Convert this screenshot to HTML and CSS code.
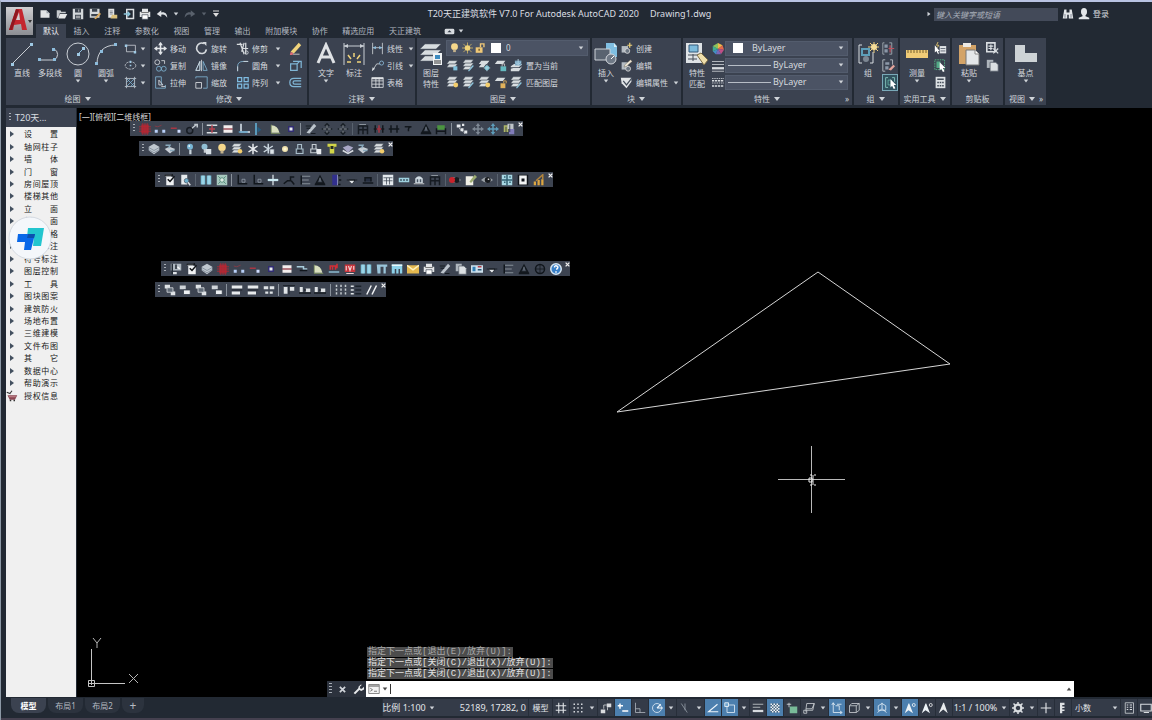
FILE: index.html
```html
<!DOCTYPE html>
<html lang="zh-CN">
<head>
<meta charset="utf-8">
<title>T20天正建筑软件 V7.0</title>
<link rel="stylesheet" href="styles.css">
</head>
<body>
<svg class="defs" aria-hidden="true">
<symbol id="dn" viewBox="0 0 8 8"><path d="M1 2h6L4 6z" fill="currentColor"/></symbol>
<symbol id="app" viewBox="0 0 27 27"><path d="M3 22 10 1h6l5 21h-5l-1-6-7 1-1 5z" fill="#c4262e"/><path d="M10 12l3-8 1 8z" fill="#d3cdd0"/><path d="M10 1 3 22h3l7-20z" fill="#8f1820"/><path d="M22 12h4l-2 3z" fill="#333"/></symbol>
<symbol id="new" viewBox="0 0 16 16"><path d="M2 3h8l4 4v6H2z" fill="#e2e4e6"/><path d="M10 3v4h4" fill="#98a0a8"/></symbol>
<symbol id="open" viewBox="0 0 16 16"><path d="M1 3h5l1 2h6v2H5l-2 6H1z" fill="#c6cacd"/><path d="M5 8h10l-3 6H3z" fill="#e5e7e8"/></symbol>
<symbol id="save" viewBox="0 0 16 16"><path d="M1 1h14v14H1z" fill="#d4d8db"/><path d="M4 1h8v5H4zM4 9h8v6H4z" fill="#3b434e"/><path d="M5 11h6M5 13h6M9 2v3" stroke="#e7e7e7"/></symbol>
<symbol id="saveas" viewBox="0 0 16 16"><path d="M1 1h13v12H1z" fill="#d4d8db"/><path d="M4 1h7v4H4zM3 8h9v3H3z" fill="#3b434e"/><path d="M7 14l7-8 2 2-7 7z" fill="#d9a95f"/></symbol>
<symbol id="webopen" viewBox="0 0 16 16"><path d="M3 1h8v12H3z" fill="#e2e4e6"/><path d="M5 4h4M5 6h4M5 8h4" stroke="#68707a"/><path d="M8 9h7v5H6z" fill="#dcc27c"/></symbol>
<symbol id="websave" viewBox="0 0 16 16"><path d="M5 2h9v12H5z" fill="none" stroke="#dce0e4" stroke-width="2"/><path d="M1 8h8M6 5l3 3-3 3" fill="none" stroke="#8bc5dc" stroke-width="2"/></symbol>
<symbol id="print" viewBox="0 0 16 16"><path d="M4 1h8v4H4zM1 5h14v7H1z" fill="#e3e5e7"/><path d="M4 9h8v6H4z" fill="#fff" stroke="#4a515c"/><path d="M3 6h10" stroke="#555"/></symbol>
<symbol id="undo" viewBox="0 0 16 16"><path d="M7 3 1 8l6 4V9c4-1 6 1 8 4 0-5-3-8-8-7z" fill="#e0e3e6"/></symbol>
<symbol id="redo" viewBox="0 0 16 16"><path d="M9 3l6 5-6 4V9C5 8 3 10 1 13c0-5 3-8 8-7z" fill="#59616c"/></symbol>
<symbol id="custom" viewBox="0 0 8 8"><path d="M1 1h6" stroke="#ddd"/><path d="M1 3h6L4 7z" fill="#ddd"/></symbol>
<symbol id="cam" viewBox="0 0 16 10"><rect x="1" y="1" width="14" height="8" rx="2" fill="#d8dce0"/><path d="M5 6l3-3 3 3z" fill="#333b46"/></symbol>
<symbol id="binoc" viewBox="0 0 16 16"><path d="M3 2h3v4h4V2h3l2 12H9V9H7v5H1z" fill="#e3e6e9"/><path d="M4 8v5M12 8v5" stroke="#697180"/></symbol>
<symbol id="user" viewBox="0 0 16 16"><ellipse cx="8" cy="5" rx="4" ry="5" fill="#e3e6e9"/><path d="M6 8h4v3l5 2v2H1v-2l5-2z" fill="#e3e6e9"/></symbol>
<symbol id="line" viewBox="0 0 24 24"><path d="M2 22 22 2" stroke="#c9ced4"/><path d="M1 21h3v3H1zM20 1h3v3h-3z" fill="#9fc9e4"/></symbol>
<symbol id="pline" viewBox="0 0 24 24"><path d="M2 18h14a6 6 0 0 0 0-11" fill="none" stroke="#c9ced4"/><path d="M0 16h3v3H0zM14 6h3v3h-3zM15 16h3v3h-3z" fill="#8dbcdc"/></symbol>
<symbol id="circle" viewBox="0 0 24 24"><circle cx="12" cy="12" r="11" fill="none" stroke="#c9ced4"/><path d="M12 12l5-5" stroke="#8dbcdc"/><path d="M11 11h3v3h-3zM16 5h3v3h-3z" fill="#9fc9e4"/></symbol>
<symbol id="arc" viewBox="0 0 24 24"><path d="M3 22C3 10 10 3 22 3" fill="none" stroke="#c9ced4"/><path d="M1 20h3v3H1zM6 8h3v3H6zM20 1h3v3h-3z" fill="#8dbcdc"/></symbol>
<symbol id="rect" viewBox="0 0 16 16"><path d="M3 4h11v8H3z" fill="none" stroke="#c9ced4"/><path d="M1 3h3v3H1zM12 11h3v3h-3z" fill="#9fc9e4"/></symbol>
<symbol id="ell" viewBox="0 0 16 16"><ellipse cx="8" cy="8" rx="6.500" ry="4.500" fill="none" stroke="#c9ced4" stroke-dasharray="3 1"/><path d="M7 7h2v2H7zM7 2h2v3H7z" fill="#9fc9e4"/></symbol>
<symbol id="hatch" viewBox="0 0 16 16"><path d="M1 3h14M1 13h14M3 1v14M13 1v14" stroke="#c9ced4"/><path d="M3 8l5-5M3 13 13 3M8 13l5-5M3 3l10 10" stroke="#7fb1d0"/></symbol>
<symbol id="move" viewBox="0 0 16 16"><path d="M8 1v14M1 8h14" stroke="#e2e5e8" stroke-width="2"/><path d="M5 4l3-4 3 4zM5 12l3 4 3-4zM4 5 0 8l4 3zM12 5l4 3-4 3z" fill="#e2e5e8"/></symbol>
<symbol id="rotate" viewBox="0 0 16 16"><path d="M11 2C5-1 0 6 3 11s10 4 11-2" fill="none" stroke="#d5d9dd" stroke-width="2"/><path d="M9 0h5v5z" fill="#d5d9dd"/></symbol>
<symbol id="trim" viewBox="0 0 16 16"><path d="M5 1l5 14M10 1 7 12M1 3h7M8 8h7M12 1v14" stroke="#d9dde0" stroke-width="1.500"/><circle cx="13" cy="13" r="2" fill="none" stroke="#d9dde0"/></symbol>
<symbol id="copy" viewBox="0 0 16 16"><circle cx="4" cy="4" r="3" fill="none" stroke="#d9dde0"/><circle cx="6" cy="12" r="3" fill="none" stroke="#80b6d6"/><circle cx="12" cy="12" r="3" fill="none" stroke="#80b6d6"/><path d="M9 2h4v4" fill="none" stroke="#d9dde0"/></symbol>
<symbol id="mirror" viewBox="0 0 16 16"><path d="M6 3v11H1zM10 3v11h5z" fill="none" stroke="#80b6d6"/><path d="M6 3v11H1zM8 1v14" fill="none" stroke="#d9dde0"/></symbol>
<symbol id="fillet" viewBox="0 0 16 16"><path d="M2 15V9Q2 3 9 3h6" fill="none" stroke="#80b6d6"/><path d="M2 15V9M9 3h6" stroke="#d9dde0"/></symbol>
<symbol id="stretch" viewBox="0 0 16 16"><path d="M2 1h7v10M2 1v14h12v-4" fill="none" stroke="#80b6d6"/><path d="M6 11V5l5 6zM9 13h5" fill="none" stroke="#e0e3e6"/></symbol>
<symbol id="scale" viewBox="0 0 16 16"><path d="M1 3V1h14v14h-5" fill="none" stroke="#80b6d6"/><path d="M1 8h7v7H1z" fill="none" stroke="#e0e3e6"/></symbol>
<symbol id="array" viewBox="0 0 16 16"><path d="M2 2h5v5H2zM2 10h5v5H2zM10 2h5v5h-5zM10 10h5v5h-5z" fill="none" stroke="#7fbbe0" stroke-width="1.500"/></symbol>
<symbol id="erase" viewBox="0 0 16 16"><path d="M2 12 12 1l3 3L6 14z" fill="#f0d37b"/><path d="M2 12l4 2-2 2H1z" fill="#db6d77"/><path d="M5 15h8" stroke="#ddd"/></symbol>
<symbol id="explode" viewBox="0 0 16 16"><path d="M2 6h8v8H2zM5 3h10v8M10 6l3-3" fill="none" stroke="#80b6d6" stroke-width="1.500"/></symbol>
<symbol id="offset" viewBox="0 0 16 16"><path d="M15 3H6q-5 0-5 5t5 5h9M15 6H7q-2 0-2 2t2 2h8" fill="none" stroke="#80b6d6" stroke-width="1.500"/></symbol>
<symbol id="bigA" viewBox="0 0 24 24"><path d="M4 21 12 3l8 18M7 15h10" fill="none" stroke="#dfe2e5" stroke-width="3"/></symbol>
<symbol id="dim" viewBox="0 0 24 24"><path d="M2 1v22M22 1v22M2 4h20" stroke="#c9ced4"/><path d="M2 4l4-2v4zM22 4l-4-2v4z" fill="#c9ced4"/><path d="M12 11v4M6 13l3 4M18 13l-3 4M5 20h4M15 20h4" stroke="#f0d37b" stroke-width="1.500"/></symbol>
<symbol id="hdim" viewBox="0 0 16 16"><path d="M2 1v14M14 1v14M2 7h12" stroke="#d2d6da"/><path d="M2 7l4-2v4zM14 7l-4-2v4z" fill="#8dbcdc"/></symbol>
<symbol id="leader" viewBox="0 0 16 16"><path d="M2 14 7 6h4" fill="none" stroke="#d2d6da"/><circle cx="13" cy="5" r="2.500" fill="none" stroke="#8dbcdc"/><path d="M1 15l1-5 3 2z" fill="#d2d6da"/></symbol>
<symbol id="table" viewBox="0 0 16 16"><path d="M1 2h14v12H1zM1 6h14M1 10h14M6 2v12M10 2v12" fill="none" stroke="#e0e3e6"/><path d="M1 3h14" stroke="#e0e3e6" stroke-width="2"/></symbol>
<symbol id="layers" viewBox="0 0 24 24"><path d="M6 2h16l-5 5H1zM6 8h16l-5 5H1zM6 14h14l-5 5H1z" fill="#d8dde0" stroke="#555d68" stroke-width=".5"/><path d="M14 11h9v12h-9z" fill="#f2f5f6"/><path d="M16 13h5v4h-5z" fill="#3d8cc0"/><path d="M15 19h7M15 21h7" stroke="#333"/></symbol>
<symbol id="ly" viewBox="0 0 16 16"><path d="M4 2h10l-3 4H1zM4 6h10l-3 4H1z" fill="#d8dde0" stroke="#4b535f" stroke-width=".5"/><path d="M9 9h5v5H9z" fill="#7fc0dc"/></symbol>
<symbol id="ly2" viewBox="0 0 16 16"><path d="M4 1h10l-3 4H1zM4 5h10l-3 4H1zM4 9h8l-3 4H1z" fill="#d8dde0" stroke="#4b535f" stroke-width=".5"/><path d="M8 15l6-7" stroke="#8fc7de" stroke-width="1.500"/></symbol>
<symbol id="lyy" viewBox="0 0 16 16"><path d="M4 1h10l-3 4H1zM4 5h10l-3 4H1zM4 9h8l-3 4H1z" fill="#d8dde0" stroke="#4b535f" stroke-width=".5"/><circle cx="12" cy="11" r="3" fill="#f3cd6c"/></symbol>
<symbol id="lyb" viewBox="0 0 16 16"><path d="M4 2h10l-3 4H1zM4 6h6l-3 4H1z" fill="#d8dde0"/><circle cx="11" cy="11" r="3" fill="#69b5c9"/><path d="M11 7v8M7 11h8" stroke="#bce2ea"/></symbol>
<symbol id="lyl" viewBox="0 0 16 16"><path d="M4 2h10l-3 4H1z" fill="#d8dde0"/><path d="M8 9h7v6H8z" fill="#65b9bf"/><path d="M10 9V6h3v3" fill="none" stroke="#ccc"/></symbol>
<symbol id="lyu" viewBox="0 0 16 16"><path d="M4 2h10l-3 4H1z" fill="#d8dde0"/><path d="M8 9h6v6H8z" fill="#e1b25b"/><path d="M12 9V6h3v3" fill="none" stroke="#e1b25b"/></symbol>
<symbol id="bulb" viewBox="0 0 16 16"><circle cx="8" cy="6" r="5" fill="#f5d78b"/><path d="M6 10h4v4H6z" fill="#c4b28c"/></symbol>
<symbol id="bulbb" viewBox="0 0 16 16"><circle cx="8" cy="5" r="4" fill="#79b7d6"/><path d="M7 9h3v6H7z" fill="#c9d4dc"/><path d="M6 3h2v2H6z" fill="#fff"/></symbol>
<symbol id="sun" viewBox="0 0 16 16"><path d="M8 0v16M0 8h16M2 2l12 12M14 2 2 14" stroke="#e9c765"/><circle cx="8" cy="8" r="4" fill="#f1d479"/></symbol>
<symbol id="lock" viewBox="0 0 16 16"><path d="M1 7h10v8H1z" fill="#efc877"/><path d="M8 7V2h5v5" fill="none" stroke="#efc877" stroke-width="2"/><path d="M6 9v3" stroke="#6a5328" stroke-width="2"/></symbol>
<symbol id="insert" viewBox="0 0 24 24"><path d="M12 1h8l3 3v11H12z" fill="#80bfe2"/><path d="M20 1v4h3" fill="#d8edf6"/><path d="M1 7h15v11H1z" fill="#596370" stroke="#cdd2d7"/><circle cx="17" cy="17" r="5" fill="#6f7986" stroke="#d5d9de"/><path d="M17 17l3-3" stroke="#fff"/></symbol>
<symbol id="create" viewBox="0 0 16 16"><path d="M2 5h8v8H2z" fill="#b5bcc3"/><circle cx="9" cy="11" r="3" fill="#6c7682" stroke="#ddd"/><path d="M12 1v6M9 4h6" stroke="#f1d479" stroke-width="1.500"/></symbol>
<symbol id="edit" viewBox="0 0 16 16"><path d="M2 4h8v9H2z" fill="#b5bcc3"/><circle cx="10" cy="12" r="3" fill="#6c7682" stroke="#ddd"/><path d="M5 10l1-3 7-6 2 2-7 6z" fill="#efe7d7" stroke="#5a5346" stroke-width=".5"/></symbol>
<symbol id="attr" viewBox="0 0 16 16"><path d="M1 2h13v5l-6 8-6-6z" fill="#e1e4e7"/><path d="M4 6l4 5 7-9" fill="none" stroke="#454e5b" stroke-width="1.500"/></symbol>
<symbol id="match" viewBox="0 0 24 24"><path d="M1 1h16v20H1z" fill="#dfe3e6"/><path d="M4 3h9v7H4z" fill="#7dbbdc" stroke="#33587a"/><path d="M3 13h11M3 17h9M8 12v7" stroke="#444c58"/><path d="M12 13l4-2 7 7-4 5z" fill="#efdfac" stroke="#7b6b45"/></symbol>
<symbol id="wheel" viewBox="0 0 16 16"><path d="M8 8V0l6 3z" fill="#f0b94b"/><path d="M8 8l6-5 2 6z" fill="#e2694b"/><path d="M8 8l8 1-4 6z" fill="#c04f87"/><path d="M8 8l4 7H5z" fill="#7a68b8"/><path d="M8 8l-3 7-4-4z" fill="#458fc6"/><path d="M8 8 1 11V4z" fill="#3fae94"/><path d="M8 8 1 4l7-4z" fill="#8dc35d"/></symbol>
<symbol id="lw" viewBox="0 0 16 16"><path d="M0 2h16M0 6h16" stroke="#d8dce0"/><path d="M0 11h16" stroke="#d8dce0" stroke-width="3"/><path d="M0 15h16" stroke="#d8dce0"/></symbol>
<symbol id="lt" viewBox="0 0 16 16"><path d="M0 2h16M0 8h16" stroke="#d8dce0" stroke-dasharray="2 1"/><path d="M0 5h16M0 12h16" stroke="#d8dce0" stroke-width="2" stroke-dasharray="3 1"/></symbol>
<symbol id="group" viewBox="0 0 24 24"><path d="M6 3H3v18h3M17 10v11h-3" fill="none" stroke="#d8dce0"/><path d="M6 7h7v6H6z" fill="none" stroke="#5d9eb9" stroke-width="2"/><circle cx="10" cy="17" r="3" fill="#7d8793"/><path d="M18 0v11M12 5h11M14 1l8 8M22 1l-8 8" stroke="#f1cf7d"/><circle cx="18" cy="5" r="3" fill="#f5dc98"/></symbol>
<symbol id="ungrp" viewBox="0 0 16 16"><path d="M3 1H1v14h2M9 1h3v14H9" fill="none" stroke="#aab1ba"/><path d="M3 3h4v4H3zM3 9h4v4H3z" fill="#8c98a8"/><path d="M10 4v9M8 8h7" stroke="#ba5461" stroke-width="1.500"/></symbol>
<symbol id="gedit" viewBox="0 0 16 16"><path d="M4 1H1v14h3M10 1h3v6" fill="none" stroke="#c3c9cf"/><path d="M4 4h5v3H4zM4 9h4v4H4z" fill="#8c98a8"/><path d="M8 13l6-6 2 2-5 5z" fill="#e3a39b"/></symbol>
<symbol id="gsel" viewBox="0 0 16 16"><path d="M5 2H2v12h3M10 2h3v5" fill="none" stroke="#8ed4c7"/><path d="M5 5h4v6H5z" fill="none" stroke="#66b5a8"/><path d="M8 4v10l2-2 2 4 2-1-2-4h3z" fill="#fff"/></symbol>
<symbol id="ruler" viewBox="0 0 24 24"><path d="M1 8h22v8H1z" fill="#f0cb77"/><path d="M3 8v3M6 8v3M9 8v3M12 8v3M15 8v3M18 8v3M21 8v3" stroke="#77602f"/></symbol>
<symbol id="qsel" viewBox="0 0 16 16"><path d="M7 5h8v9H7z" fill="#e0e4e7"/><path d="M8 8h6M8 11h6" stroke="#505966"/><path d="M1 4v9l2-2 2 4 1-1-1-3h2z" fill="#fff"/><path d="M5 0l-2 4h3L4 7" stroke="#f2d271" fill="none"/></symbol>
<symbol id="isel" viewBox="0 0 16 16"><path d="M1 1h12v12H1z" fill="none" stroke="#55bc88" stroke-dasharray="2 1"/><path d="M3 3h5v8H3z" fill="#53a987"/><path d="M7 4v10l2-2 2 4 2-1-2-4h3z" fill="#fff"/></symbol>
<symbol id="calc" viewBox="0 0 16 16"><path d="M2 1h12v14H2z" fill="#dde1e4"/><path d="M4 3h8v2H4zM4 7h2v2H4zM7 7h2v2H7zM10 7h2v2h-2zM4 11h2v2H4zM7 11h2v2H7zM10 11h2v2h-2z" fill="#454e5a"/></symbol>
<symbol id="paste" viewBox="0 0 24 24"><path d="M2 3h17v19H2z" fill="#d3a367"/><path d="M6 1h8v4H6z" fill="#ece9e3"/><path d="M9 8h9l4 4v11H9z" fill="#e4e7e9" stroke="#777"/><path d="M18 8v4h4" fill="#fff" stroke="#888"/></symbol>
<symbol id="cut" viewBox="0 0 16 16"><path d="M1 1h10v11H1z" fill="none" stroke="#d9dde1" stroke-width="2"/><path d="M3 5h6M3 8h5M6 3v7M9 8l6 6M15 8l-6 6" stroke="#d9dde1" stroke-width="1.500"/></symbol>
<symbol id="pages" viewBox="0 0 16 16"><path d="M1 1h8v10H1z" fill="#aeb5bc"/><path d="M5 4h7l3 3v8H5z" fill="#dce0e3" stroke="#555d68"/></symbol>
<symbol id="base" viewBox="0 0 24 24"><path d="M1 3h10v8h12v9H1z" fill="#ced3d6"/></symbol>
<symbol id="redgrid" viewBox="0 0 16 16"><path d="M3 2h10v12H3z" fill="#9c2c38"/><path d="M5 0v16M8 0v16M11 0v16M0 5h16M0 8h16M0 11h16" stroke="#bb2533"/></symbol>
<symbol id="dots" viewBox="0 0 16 16"><path d="M1 4l4 1 5-2" stroke="#963844" fill="none"/><path d="M1 9h4v4H1zM11 9h4v4h-4z" fill="#b8cff8"/></symbol>
<symbol id="dot1" viewBox="0 0 16 16"><path d="M1 7h8" stroke="#a73643" stroke-width="2"/><path d="M10 9h4v4h-4z" fill="#cfdcff"/></symbol>
<symbol id="circ" viewBox="0 0 16 16"><circle cx="5" cy="10" r="4" fill="none" stroke="#171c23" stroke-width="2"/><path d="M8 7l6-5M11 2h4v4" stroke="#bfc6cd" fill="none" stroke-width="2"/></symbol>
<symbol id="ibeam" viewBox="0 0 16 16"><path d="M1 3h14M1 13h14" stroke="#d8dde1" stroke-width="2"/><path d="M8 3v10M4 8h8" stroke="#b84350" stroke-width="2"/></symbol>
<symbol id="wbox" viewBox="0 0 16 16"><path d="M2 3h12v4H2zM2 9h12v4H2z" fill="#f3eeee"/><path d="M2 8h12" stroke="#ce7b83" stroke-width="2"/></symbol>
<symbol id="ell2" viewBox="0 0 16 16"><path d="M4 1v11h12" fill="none" stroke="#dfeaf4" stroke-width="2"/><path d="M1 12h12" stroke="#5f9fc5" stroke-width="2"/></symbol>
<symbol id="vbar" viewBox="0 0 16 16"><path d="M4 0v16" stroke="#64b7df" stroke-width="2"/><path d="M6 5l5 4-5 4z" fill="#255c7f"/></symbol>
<symbol id="door" viewBox="0 0 16 16"><path d="M3 3q9 0 11 10H3z" fill="#d9dfbe"/><path d="M3 2v12h12" fill="none" stroke="#7f945f"/></symbol>
<symbol id="sq" viewBox="0 0 16 16"><path d="M4 4h8v8H4z" fill="#312c73"/><path d="M6 6h4v4H6z" fill="#e9edf3"/></symbol>
<symbol id="pen" viewBox="0 0 16 16"><path d="M2 13 12 1l3 3-9 10z" fill="#bcc4cc"/><path d="M1 4h7M2 7h5M8 14h6" stroke="#171c23" stroke-width="1.500"/></symbol>
<symbol id="dmove" viewBox="0 0 16 16"><path d="M8 1v14M1 8h14M5 4l3-3 3 3M5 12l3 3 3-3" stroke="#1a2027" fill="none" stroke-width="2"/><path d="M8 3v4M3 8h4M9 8h4M8 10v3" stroke="#b7bec6"/></symbol>
<symbol id="gmove" viewBox="0 0 16 16"><path d="M8 0l3 4H9v3h3V5l4 3-4 3V9H9v3h2l-3 4-3-4h2V9H4v2L0 8l4-3v2h3V4H5z" fill="#7e8894"/></symbol>
<symbol id="bmove" viewBox="0 0 16 16"><path d="M8 0l3 4H9v3h3V5l4 3-4 3V9H9v3h2l-3 4-3-4h2V9H4v2L0 8l4-3v2h3V4H5z" fill="#5d9dba"/></symbol>
<symbol id="comb" viewBox="0 0 16 16"><path d="M1 4h14M2 3v12M8 3v12M14 3v12M2 9h12" stroke="#161b22" stroke-width="2"/><path d="M3 2h9" stroke="#a6adb5"/></symbol>
<symbol id="ddim" viewBox="0 0 16 16"><path d="M1 8h14M4 3v10M12 3v10" stroke="#12171d" stroke-width="2"/></symbol>
<symbol id="rdim" viewBox="0 0 16 16"><path d="M1 8h14M3 3v10M13 3v10" stroke="#12171d" stroke-width="2"/><path d="M8 3v10M5 8h6" stroke="#a83745" stroke-width="2"/></symbol>
<symbol id="gdim" viewBox="0 0 16 16"><path d="M3 3h10v6H3z" fill="#4b9440"/><path d="M1 11h14M2 7v8M14 7v8" stroke="#12171d" stroke-width="2"/></symbol>
<symbol id="tick" viewBox="0 0 16 16"><path d="M1 5h9q-5 0-4 6" fill="none" stroke="#12171d" stroke-width="2"/></symbol>
<symbol id="tri" viewBox="0 0 16 16"><path d="M3 12 8 3l5 9zM1 14h14" fill="none" stroke="#12171d" stroke-width="2"/><path d="M8 5v5" stroke="#8f99a3"/></symbol>
<symbol id="diag" viewBox="0 0 16 16"><path d="M1 2h5v4H1zM8 1h3v3H8zM6 7h4v4H6zM11 10h4v4h-4z" fill="#e6e9ed"/><path d="M4 7l8 7" stroke="#e6e9ed" stroke-dasharray="2 1"/></symbol>
<symbol id="book" viewBox="0 0 16 16"><path d="M1 3h6v9H1z" fill="#aeb66a"/><path d="M6 1h8v7H6z" fill="#bec4c9"/><path d="M8 8h7v7H8z" fill="#817cb9"/><path d="M4 5v8M9 2v10" stroke="#222832"/></symbol>
<symbol id="lys" viewBox="0 0 16 16"><path d="M1 5l7-4 7 4v5l-7 5-7-5z" fill="#bfc7cf"/><path d="M1 6l7 4 7-4M1 9l7 4 7-4" fill="none" stroke="#778391"/></symbol>
<symbol id="lyz" viewBox="0 0 16 16"><path d="M1 8l6-3 8 3-7 6z" fill="#c8ced5"/><path d="M2 3h6l-2 4M8 10h6" fill="none" stroke="#8aaabd" stroke-width="2"/></symbol>
<symbol id="setcur" viewBox="0 0 16 16"><path d="M1 9l4-3h10l-4 4H1zM1 12l3-1h8l3-2-4 6H1z" fill="#d8dde0"/><path d="M6 2h8v6H6z" fill="#7fa9c3"/><path d="M10 0v6M7 4l3 3 3-3" fill="none" stroke="#b9dcee"/></symbol>
<symbol id="lyp" viewBox="0 0 16 16"><path d="M1 6l7-3 7 3-7 7z" fill="#a9a7c6"/><path d="M1 10l7 4 7-4" fill="none" stroke="#d9dde2" stroke-width="2"/></symbol>
<symbol id="star" viewBox="0 0 16 16"><path d="M8 1v14M2 4l12 8M14 4 2 12" stroke="#e9ecef" stroke-width="2"/></symbol>
<symbol id="starp" viewBox="0 0 16 16"><path d="M7 1v13M1 4l12 8M13 4 1 12" stroke="#cad6df" stroke-width="2"/><path d="M9 8h6v7H9z" fill="#dde4e9" stroke="#414a58"/></symbol>
<symbol id="bulbp" viewBox="0 0 16 16"><circle cx="6" cy="5" r="4" fill="#91bfd4"/><path d="M5 8h3v5H5z" fill="#c5cbd1"/><path d="M8 8h7v7H8z" fill="#d8e0e6"/></symbol>
<symbol id="glow" viewBox="0 0 16 16"><circle cx="8" cy="8" r="4" fill="#efe1ad"/><circle cx="8" cy="8" r="2" fill="#fff6d1"/></symbol>
<symbol id="lk" viewBox="0 0 16 16"><path d="M5 8V2h5v6M3 8h9v6H3z" fill="none" stroke="#a8bdc9" stroke-width="1.500"/><path d="M5 10h4" stroke="#161c24" stroke-width="2"/></symbol>
<symbol id="lkp" viewBox="0 0 16 16"><path d="M3 8V2h5v6M1 8h8v5H1z" fill="none" stroke="#c4ccd2" stroke-width="1.500"/><path d="M9 8h6v7H9z" fill="#e7eaed"/></symbol>
<symbol id="lky" viewBox="0 0 16 16"><path d="M2 1h12v4h-3v9H5V5H2z" fill="#d2d548"/><path d="M6 4h4v4H6z" fill="#262d22"/></symbol>
<symbol id="clip" viewBox="0 0 16 16"><path d="M3 4h10v11H3z" fill="#eff1f3"/><path d="M1 2h9l2-1M5 7l3 3 6-7" fill="none" stroke="#101317" stroke-width="2"/><path d="M2 3h8" stroke="#eff1f3"/></symbol>
<symbol id="pgs" viewBox="0 0 16 16"><path d="M3 1h8v13H3z" fill="#e6eaed"/><circle cx="10" cy="9" r="3" fill="#6fb0cd" stroke="#4a5766"/><path d="M12 11l3 4" stroke="#d5dce2" stroke-width="2"/></symbol>
<symbol id="cols" viewBox="0 0 16 16"><path d="M1 2h6v12H1zM9 2h6v12H9z" fill="#83c5dc"/><path d="M4 2v12M12 2v12" stroke="#c5edf6"/></symbol>
<symbol id="cols2" viewBox="0 0 16 16"><path d="M1 2h14v3h-2v9h-3V5H6v9H2z" fill="#9ac5da"/></symbol>
<symbol id="mcol" viewBox="0 0 16 16"><path d="M1 2h14v12h-3V8h-2v6H7V8H5v6H1z" fill="#8dd1e9"/><path d="M1 3h14" stroke="#e9f8fc" stroke-width="2"/></symbol>
<symbol id="elev" viewBox="0 0 16 16"><path d="M1 1h14v14H1z" fill="#a8c9bf"/><path d="M3 3l10 10M13 3 3 13" stroke="#3f7c69"/><circle cx="8" cy="8" r="3" fill="#deebe4" stroke="#3f7c69"/></symbol>
<symbol id="l0" viewBox="0 0 16 16"><path d="M3 1v12h12" fill="none" stroke="#11161c" stroke-width="2"/><path d="M8 7h4v4H8z" fill="none" stroke="#98a2ad"/></symbol>
<symbol id="cross" viewBox="0 0 16 16"><path d="M8 1v14" stroke="#c5ccd3" stroke-width="2"/><path d="M1 8h14" stroke="#cbeaf2" stroke-width="3"/></symbol>
<symbol id="wall" viewBox="0 0 16 16"><path d="M1 5h9v3h5" fill="none" stroke="#a9cddd" stroke-width="2"/><path d="M5 10h10" stroke="#11161c" stroke-width="2"/></symbol>
<symbol id="step" viewBox="0 0 16 16"><path d="M1 13 6 9h4V4h5M11 9l4 5" fill="none" stroke="#11161c" stroke-width="2"/></symbol>
<symbol id="lines" viewBox="0 0 16 16"><path d="M4 3h11M4 8h9M4 13h11" stroke="#9ea6af"/><path d="M3 2v12" stroke="#11161c" stroke-width="2"/></symbol>
<symbol id="bdoor" viewBox="0 0 16 16"><path d="M3 1h7v14H3z" fill="#312f8d"/><path d="M11 2h3M12 8h3M11 14h3" stroke="#11161c" stroke-width="2"/><path d="M10 1v14" stroke="#9fa2cd"/></symbol>
<symbol id="fun" viewBox="0 0 16 16"><path d="M1 8h14M4 8h8l-4 5z" fill="#11161c" stroke="#11161c"/><path d="M4 9h7l-3 4z" fill="#e5e9ec"/></symbol>
<symbol id="hat" viewBox="0 0 16 16"><path d="M1 12h14M4 10V5h8v5" stroke="#11161c" fill="#252d3e" stroke-width="2"/></symbol>
<symbol id="tbl" viewBox="0 0 16 16"><path d="M1 1h14v14H1z" fill="#e3e8ec"/><path d="M2 5h12M2 9h12M6 5v9M10 5v9" stroke="#3c4653"/></symbol>
<symbol id="rail" viewBox="0 0 16 16"><path d="M1 5h14v6H1z" fill="#9fd1df"/><path d="M3 8h2M7 8h2M11 8h2" stroke="#263543" stroke-width="2"/></symbol>
<symbol id="arch" viewBox="0 0 16 16"><path d="M3 12V6q5-6 10 0v6z" fill="#d0dbe2"/><path d="M5 7h2v4H5zM9 7h2v4H9z" fill="#485563"/><path d="M1 13h14" stroke="#eee"/></symbol>
<symbol id="eye" viewBox="0 0 16 16"><path d="M0 8q8-8 16 0-8 7-16 0z" fill="#9ba2a8"/><circle cx="9" cy="8" r="4" fill="#171a1e"/><path d="M9 6h2v2H9z" fill="#ddd"/></symbol>
<symbol id="reye" viewBox="0 0 16 16"><path d="M0 8q8-8 16 0-8 7-16 0z" fill="#9ba2a8"/><circle cx="10" cy="8" r="4" fill="#171a1e"/><circle cx="4" cy="8" r="4" fill="#c9242c"/></symbol>
<symbol id="note" viewBox="0 0 16 16"><path d="M1 3h10v12H1z" fill="#f0efe6"/><path d="M6 10l7-9 3 3-8 8z" fill="#9cab72"/></symbol>
<symbol id="grid4" viewBox="0 0 16 16"><path d="M1 1h14v14H1z" fill="#a7d7e3"/><path d="M1 8h14M8 1v14M4 4h2M4 11h2M11 4h2M11 11h2" stroke="#346273" stroke-width="2"/></symbol>
<symbol id="frame" viewBox="0 0 16 16"><path d="M1 1h14v14H1z" fill="#10141a"/><path d="M3 2h10v12H3z" fill="#f2f4f5"/><path d="M6 6h4v4H6z" fill="#10141a"/></symbol>
<symbol id="chart" viewBox="0 0 16 16"><path d="M1 10h3v5H1zM6 8h3v7H6zM11 7h3v8h-3z" fill="#dea641"/><path d="M4 9l9-8v6" fill="none" stroke="#b1843c" stroke-width="2"/></symbol>
<symbol id="m2" viewBox="0 0 16 16"><path d="M3 9V4h7v5M6 4v5M12 1v6" stroke="#d32e36" fill="none" stroke-width="2"/><path d="M1 12h14" stroke="#8dbbd2" stroke-width="2"/></symbol>
<symbol id="rbox" viewBox="0 0 16 16"><path d="M1 2h14v10H1z" fill="#c9353d"/><path d="M3 4v6M6 4l2 6 2-6M13 4v5M3 14h10" stroke="#f3d4d3" stroke-width="1.500" fill="none"/></symbol>
<symbol id="mail" viewBox="0 0 16 16"><path d="M0 3h16v11H0z" fill="#e5b950"/><path d="M0 3l8 6 8-6" fill="none" stroke="#fff2bd" stroke-width="2"/></symbol>
<symbol id="cards" viewBox="0 0 16 16"><path d="M0 3h16v10H0z" fill="#cde1ed"/><path d="M2 5h4v6H2z" fill="#317fb4"/><path d="M9 5h5" stroke="#b73e46" stroke-width="2"/><path d="M9 9h5" stroke="#2c5674" stroke-width="2"/></symbol>
<symbol id="globe" viewBox="0 0 16 16"><circle cx="8" cy="8" r="6" fill="none" stroke="#11161c" stroke-width="2"/><path d="M2 8h12M8 2v12" stroke="#11161c"/></symbol>
<symbol id="help" viewBox="0 0 16 16"><circle cx="8" cy="8" r="7" fill="#397fc7" stroke="#d8e7f3" stroke-width="2"/><path d="M6 6q0-3 3-2t0 4v1M8 11v2" fill="none" stroke="#fff" stroke-width="2"/></symbol>
<symbol id="flag" viewBox="0 0 16 16"><path d="M1 1h14v9H1z" fill="#aeb7bf"/><path d="M3 1v14M8 2v6" stroke="#232b35" stroke-width="2"/><path d="M10 5l3 3" stroke="#f2f4f5" stroke-width="2"/><path d="M4 12h5v3H4z" fill="#dde1e5"/></symbol>
<symbol id="ord" viewBox="0 0 16 16"><path d="M1 2h8v5H1z" fill="#cfd4d9"/><path d="M6 8h9v6H6z" fill="#edf0f2" stroke="#303844"/></symbol>
<symbol id="ord2" viewBox="0 0 16 16"><path d="M1 1h7v5H1zM9 10h6v5H9z" fill="#dfe3e6"/><path d="M4 5h8v6H4z" fill="#616b77" stroke="#dfe3e6"/></symbol>
<symbol id="alh" viewBox="0 0 16 16"><path d="M1 2h14v4H1zM1 10h11v4H1z" fill="#e7eaec"/><path d="M1 8h14" stroke="#171c23"/></symbol>
<symbol id="alc" viewBox="0 0 16 16"><path d="M1 3h6v4H1zM9 3h6v4H9zM3 10h4v3H3zM9 10h4v3H9z" fill="#dfe3e6"/></symbol>
<symbol id="alv" viewBox="0 0 16 16"><path d="M1 4h5v9H1zM9 4h6v5H9z" fill="#dfe3e6"/><path d="M0 2h16M8 2v12" stroke="#171c23"/></symbol>
<symbol id="alm" viewBox="0 0 16 16"><path d="M1 4h4v7H1zM9 6h6v5H9z" fill="#dfe3e6"/><path d="M0 12h16M7 8h2" stroke="#171c23" stroke-width="2"/></symbol>
<symbol id="vv" viewBox="0 0 16 16"><path d="M2 1v14M8 1v14M14 1v14" stroke="#c4cacf" stroke-width="2" stroke-dasharray="3 2"/></symbol>
<symbol id="bul" viewBox="0 0 16 16"><path d="M1 3h4M1 8h4M1 13h4" stroke="#e0e4e7" stroke-width="2"/><path d="M7 3h8M7 8h8M7 13h8" stroke="#1b222b" stroke-width="2"/></symbol>
<symbol id="par" viewBox="0 0 16 16"><path d="M1 14 7 2M8 14l6-12" stroke="#f0f2f4" stroke-width="2"/></symbol>
<symbol id="x" viewBox="0 0 8 8"><path d="M1 1l6 6M7 1 1 7" stroke="currentColor" stroke-width="2"/></symbol>
<symbol id="wrench" viewBox="0 0 16 16"><path d="M2 14 10 6" stroke="#e8eaec" stroke-width="3"/><path d="M13 1l-3 3v3h3l3-3v4l-4 2-4-2V4l3-3z" fill="#e8eaec"/></symbol>
<symbol id="cmd" viewBox="0 0 16 16"><path d="M1 2h14v12H1z" fill="#f4f4f4" stroke="#666"/><path d="M1 4h14" stroke="#888" stroke-width="2"/><path d="M3 7l3 2-3 2M8 11h4" fill="none" stroke="#555"/></symbol>
<symbol id="sgrid" viewBox="0 0 16 16"><path d="M5 1v14M11 1v14M1 5h14M1 11h14" stroke="#e0e3e6" stroke-width="1.500"/></symbol>
<symbol id="sdots" viewBox="0 0 16 16"><path d="M2 3h12M2 8h12M2 13h12" stroke="#d5d9dd" stroke-width="2" stroke-dasharray="2 3"/></symbol>
<symbol id="s1" viewBox="0 0 16 16"><path d="M1 10h6v5H1zM9 2h6v5H9z" fill="#d9dcdf"/><path d="M5 9V4h4M10 11V7" fill="none" stroke="#d9dcdf"/></symbol>
<symbol id="s2" viewBox="0 0 16 16"><path d="M1 5h7M4 2v7M7 12h8" stroke="#fff" stroke-width="2"/></symbol>
<symbol id="s3" viewBox="0 0 16 16"><path d="M2 1v13h13M2 9h6v5" fill="none" stroke="#b7bdc4"/></symbol>
<symbol id="s4" viewBox="0 0 16 16"><circle cx="8" cy="8" r="6" fill="none" stroke="#eef6fc"/><path d="M8 8h8M8 8l5-5" stroke="#eef6fc" fill="none" stroke-width="1.500"/></symbol>
<symbol id="s5" viewBox="0 0 16 16"><path d="M3 2l8 12M8 2v9" stroke="#9ca4ad"/></symbol>
<symbol id="s6" viewBox="0 0 16 16"><path d="M14 3 2 13h13" fill="none" stroke="#eef6fc" stroke-width="1.500"/></symbol>
<symbol id="s7" viewBox="0 0 16 16"><path d="M4 4h10v10H4z" fill="none" stroke="#eef6fc"/><path d="M1 1h5v5H1z" fill="#71a6cf" stroke="#fff"/></symbol>
<symbol id="s8" viewBox="0 0 16 16"><path d="M1 3h14M1 7h10" stroke="#d7dbdf"/><path d="M1 12h14" stroke="#d7dbdf" stroke-width="3"/></symbol>
<symbol id="s9" viewBox="0 0 16 16"><path d="M2 2h12v12H2z" fill="#4f6c85"/><path d="M2 3h12M2 7h12M2 11h12" stroke="#f0f4f7" stroke-width="2" stroke-dasharray="2 2"/><path d="M4 5h10M4 9h10M4 13h10" stroke="#f0f4f7" stroke-width="2" stroke-dasharray="2 2"/></symbol>
<symbol id="s10" viewBox="0 0 16 16"><path d="M5 6h10v9H5z" fill="#79bb99"/><path d="M1 3h6M4 1v6" stroke="#e3e6e8"/></symbol>
<symbol id="s11" viewBox="0 0 16 16"><path d="M5 2h10l-3 7H4zM4 9v4M1 11h4v4H1zM15 2l-2 9H5" fill="none" stroke="#d7dbdf"/></symbol>
<symbol id="s12" viewBox="0 0 16 16"><path d="M3 1v13h11M1 4l2-3 2 3M12 12l3 2-3 2M6 5h5v6M8 3h6" fill="none" stroke="#f2f7fb"/></symbol>
<symbol id="s13" viewBox="0 0 16 16"><path d="M2 5h9v9H2zM2 5l3-3h10l-4 3M15 2v9l-4 3" fill="none" stroke="#d7dbdf"/></symbol>
<symbol id="s14" viewBox="0 0 16 16"><path d="M8 1v8l-6 5M8 9l6 5M3 5l5-3 5 3v6H3z" fill="none" stroke="#eef5fb"/></symbol>
<symbol id="ann" viewBox="0 0 16 16"><path d="M7 1 1 15l6-5 6 5-5-14z" fill="#e8ebed"/></symbol>
<symbol id="anno" viewBox="0 0 16 16"><path d="M6 2 1 15l5-4 6 4-5-13z" fill="#edf3f7"/><circle cx="13" cy="4" r="2" fill="none" stroke="#fff"/></symbol>
<symbol id="gear" viewBox="0 0 16 16"><circle cx="8" cy="8" r="4.500" fill="none" stroke="#d9dde0" stroke-width="3"/><path d="M8 0v3M8 13v3M0 8h3M13 8h3M2 2l3 3M11 11l3 3M14 2l-3 3M5 11l-3 3" stroke="#d9dde0" stroke-width="2"/></symbol>
<symbol id="plus" viewBox="0 0 16 16"><path d="M8 1v14M1 8h14" stroke="#e2e5e8" stroke-width="1.500"/></symbol>
<symbol id="unit" viewBox="0 0 16 16"><path d="M4 1h6v3H7v2h3v2H7v2h3v2H7v3H4z" fill="#dfe2e5"/></symbol>
<symbol id="props" viewBox="0 0 16 16"><path d="M3 1h11v14H3z" fill="none" stroke="#d7dbdf"/><path d="M5 4h2M9 4h3M5 7h2M9 7h3M5 10h2M9 10h3" stroke="#d7dbdf" stroke-width="1.500"/></symbol>
<symbol id="mon" viewBox="0 0 16 16"><path d="M1 3h14v9H1zM5 14h7" fill="none" stroke="#d7dbdf" stroke-width="1.500"/></symbol>
<symbol id="cart" viewBox="0 0 16 16"><path d="M1 3l5 2M8 1 5 5" stroke="#333" stroke-width="1.500"/><path d="M2 7h13l-3 6H5z" fill="#8b4551"/><path d="M4 9h9" stroke="#d9a0a6"/><path d="M5 14h2M10 14h2" stroke="#333" stroke-width="2"/></symbol>
</svg>

<header class="top">
  <button class="app" aria-label="应用程序菜单"><svg><use href="#app"/></svg></button>
  <div class="top-main">
    <div class="titlebar">
      <div class="quick">
        <div class="quick-set">
          <button aria-label="新建"><svg><use href="#new"/></svg></button><button aria-label="打开"><svg><use href="#open"/></svg></button><button aria-label="保存"><svg><use href="#save"/></svg></button><button aria-label="另存为"><svg><use href="#saveas"/></svg></button><button aria-label="从网络打开"><svg><use href="#webopen"/></svg></button><button aria-label="保存到网络"><svg><use href="#websave"/></svg></button><button aria-label="打印"><svg><use href="#print"/></svg></button><button aria-label="放弃"><svg><use href="#undo"/></svg></button>
        </div>
        <svg class="dn"><use href="#dn"/></svg>
        <button aria-label="重做"><svg><use href="#redo"/></svg></button>
        <svg class="dn dim"><use href="#dn"/></svg>
        <button class="narrow" aria-label="自定义"><svg><use href="#custom"/></svg></button>
      </div>
      <h1>T20天正建筑软件 V7.0 For Autodesk AutoCAD 2020<span>Drawing1.dwg</span></h1>
      <div class="account">
        <svg class="dn side"><use href="#dn"/></svg>
        <input type="search" placeholder="键入关键字或短语" aria-label="搜索">
        <button aria-label="查找"><svg><use href="#binoc"/></svg></button>
        <button class="login"><svg><use href="#user"/></svg>登录</button>
      </div>
    </div>
    <nav class="tabs">
      <div class="tab-list"><button class="on">默认</button><button>插入</button><button>注释</button><button>参数化</button><button>视图</button><button>管理</button><button>输出</button><button>附加模块</button><button>协作</button><button>精选应用</button><button>天正建筑</button></div>
      <button class="cam" aria-label="显示方式"><svg><use href="#cam"/></svg></button><svg class="dn"><use href="#dn"/></svg>
    </nav>
  </div>
</header>

<section class="ribbon">
  <div class="panel p-draw">
    <div class="body">
      <button class="big"><svg><use href="#line"/></svg>直线</button>
      <button class="big"><svg><use href="#pline"/></svg>多段线</button>
      <button class="big"><svg><use href="#circle"/></svg>圆<svg class="dn"><use href="#dn"/></svg></button>
      <button class="big"><svg><use href="#arc"/></svg>圆弧<svg class="dn"><use href="#dn"/></svg></button>
      <div class="col">
        <button class="sm" aria-label="矩形"><svg><use href="#rect"/></svg><svg class="dn"><use href="#dn"/></svg></button>
        <button class="sm" aria-label="椭圆"><svg><use href="#ell"/></svg><svg class="dn"><use href="#dn"/></svg></button>
        <button class="sm" aria-label="填充"><svg><use href="#hatch"/></svg><svg class="dn"><use href="#dn"/></svg></button>
      </div>
    </div>
    <h2>绘图<svg class="dn"><use href="#dn"/></svg></h2>
  </div>
  <div class="panel p-modify">
    <div class="body">
      <div class="col"><button class="sm"><svg><use href="#move"/></svg>移动</button><button class="sm"><svg><use href="#copy"/></svg>复制</button><button class="sm"><svg><use href="#stretch"/></svg>拉伸</button></div>
      <div class="col"><button class="sm"><svg><use href="#rotate"/></svg>旋转</button><button class="sm"><svg><use href="#mirror"/></svg>镜像</button><button class="sm"><svg><use href="#scale"/></svg>缩放</button></div>
      <div class="col"><button class="sm"><svg><use href="#trim"/></svg>修剪<svg class="dn"><use href="#dn"/></svg></button><button class="sm"><svg><use href="#fillet"/></svg>圆角<svg class="dn"><use href="#dn"/></svg></button><button class="sm"><svg><use href="#array"/></svg>阵列<svg class="dn"><use href="#dn"/></svg></button></div>
      <div class="col"><button class="sm" aria-label="删除"><svg><use href="#erase"/></svg></button><button class="sm" aria-label="分解"><svg><use href="#explode"/></svg></button><button class="sm" aria-label="偏移"><svg><use href="#offset"/></svg></button></div>
    </div>
    <h2>修改<svg class="dn"><use href="#dn"/></svg></h2>
  </div>
  <div class="panel p-note">
    <div class="body">
      <button class="big"><svg><use href="#bigA"/></svg>文字<svg class="dn"><use href="#dn"/></svg></button>
      <button class="big"><svg><use href="#dim"/></svg>标注</button>
      <div class="col"><button class="sm"><svg><use href="#hdim"/></svg>线性<svg class="dn"><use href="#dn"/></svg></button><button class="sm"><svg><use href="#leader"/></svg>引线<svg class="dn"><use href="#dn"/></svg></button><button class="sm"><svg><use href="#table"/></svg>表格</button></div>
    </div>
    <h2>注释<svg class="dn"><use href="#dn"/></svg></h2>
  </div>
  <div class="panel p-layer">
    <div class="body">
      <button class="big"><svg><use href="#layers"/></svg>图层<br>特性</button>
      <div class="col grow">
        <div class="combo layers"><svg><use href="#bulb"/></svg><svg><use href="#sun"/></svg><svg><use href="#lock"/></svg><i class="swatch"></i><select aria-label="图层"><option>0</option></select><svg class="dn"><use href="#dn"/></svg></div>
        <div class="line"><button class="sm" aria-label="关"><svg><use href="#ly"/></svg></button><button class="sm" aria-label="隔离"><svg><use href="#ly2"/></svg></button><button class="sm" aria-label="冻结"><svg><use href="#lyb"/></svg></button><button class="sm" aria-label="锁定"><svg><use href="#lyl"/></svg></button><button class="sm"><svg><use href="#setcur"/></svg>置为当前</button></div>
        <div class="line"><button class="sm" aria-label="打开所有"><svg><use href="#lyy"/></svg></button><button class="sm" aria-label="取消隔离"><svg><use href="#ly2"/></svg></button><button class="sm" aria-label="解冻"><svg><use href="#lyy"/></svg></button><button class="sm" aria-label="解锁"><svg><use href="#lyu"/></svg></button><button class="sm"><svg><use href="#ly2"/></svg>匹配图层</button></div>
      </div>
    </div>
    <h2>图层<svg class="dn"><use href="#dn"/></svg></h2>
  </div>
  <div class="panel p-block">
    <div class="body">
      <button class="big"><svg><use href="#insert"/></svg>插入<svg class="dn"><use href="#dn"/></svg></button>
      <div class="col"><button class="sm"><svg><use href="#create"/></svg>创建</button><button class="sm"><svg><use href="#edit"/></svg>编辑</button><button class="sm"><svg><use href="#attr"/></svg>编辑属性<svg class="dn"><use href="#dn"/></svg></button></div>
    </div>
    <h2>块<svg class="dn"><use href="#dn"/></svg></h2>
  </div>
  <div class="panel p-prop">
    <div class="body">
      <button class="big"><svg><use href="#match"/></svg>特性<br>匹配</button>
      <div class="col grow">
        <div class="line"><svg><use href="#wheel"/></svg><div class="combo color"><i class="swatch"></i><select aria-label="颜色"><option>ByLayer</option></select><svg class="dn"><use href="#dn"/></svg></div></div>
        <div class="line"><svg><use href="#lw"/></svg><div class="combo"><i class="stroke"></i><select aria-label="线宽"><option>ByLayer</option></select><svg class="dn"><use href="#dn"/></svg></div></div>
        <div class="line"><svg><use href="#lt"/></svg><div class="combo"><i class="stroke"></i><select aria-label="线型"><option>ByLayer</option></select><svg class="dn"><use href="#dn"/></svg></div></div>
      </div>
    </div>
    <h2>特性<svg class="dn"><use href="#dn"/></svg><span class="more">»</span></h2>
  </div>
  <div class="panel p-group">
    <div class="body">
      <button class="big"><svg><use href="#group"/></svg>组</button>
      <div class="col"><button class="sm" aria-label="解除编组"><svg><use href="#ungrp"/></svg></button><button class="sm" aria-label="组编辑"><svg><use href="#gedit"/></svg></button><button class="sm lit" aria-label="组选择"><svg><use href="#gsel"/></svg></button></div>
    </div>
    <h2>组<svg class="dn"><use href="#dn"/></svg></h2>
  </div>
  <div class="panel p-util">
    <div class="body">
      <button class="big"><svg><use href="#ruler"/></svg>测量<svg class="dn"><use href="#dn"/></svg></button>
      <div class="col"><button class="sm" aria-label="快速选择"><svg><use href="#qsel"/></svg></button><button class="sm" aria-label="全部选择"><svg><use href="#isel"/></svg></button><button class="sm" aria-label="计算器"><svg><use href="#calc"/></svg></button></div>
    </div>
    <h2>实用工具<svg class="dn"><use href="#dn"/></svg></h2>
  </div>
  <div class="panel p-clip">
    <div class="body">
      <button class="big"><svg><use href="#paste"/></svg>粘贴<svg class="dn"><use href="#dn"/></svg></button>
      <div class="col"><button class="sm" aria-label="剪切"><svg><use href="#cut"/></svg></button><button class="sm" aria-label="复制剪裁"><svg><use href="#pages"/></svg></button></div>
    </div>
    <h2>剪贴板</h2>
  </div>
  <div class="panel p-view">
    <div class="body"><button class="big"><svg><use href="#base"/></svg>基点<svg class="dn"><use href="#dn"/></svg></button></div>
    <h2>视图<svg class="dn"><use href="#dn"/></svg><span class="more">»</span></h2>
  </div>
</section>

<main>
  <aside class="palette">
    <h2><i class="grip"></i>T20天...</h2>
    <ul>
      <li><span>设置</span></li><li><span>轴网柱子</span></li><li><span>墙体</span></li><li><span>门窗</span></li><li><span>房间屋顶</span></li><li><span>楼梯其他</span></li><li><span>立面</span></li><li><span>剖面</span></li><li><span>文字表格</span></li><li><span>尺寸标注</span></li><li><span>符号标注</span></li><li><span>图层控制</span></li><li><span>工具</span></li><li><span>图块图案</span></li><li><span>建筑防火</span></li><li><span>场地布置</span></li><li><span>三维建模</span></li><li><span>文件布图</span></li><li><span>其它</span></li><li><span>数据中心</span></li><li><span>帮助演示</span></li><li class="auth"><svg><use href="#cart"/></svg><span>授权信息</span></li>
    </ul>
    <svg class="badge" viewBox="0 0 44 44"><circle cx="22" cy="22" r="21" fill="#f4f7fb" stroke="#d5dae1"/><path d="M20 12h16l-3 18h-8l1-9h-7z" fill="#22c5cf"/><path d="M10 18h17l-4 16h-7l1-8H9z" fill="#0867e8"/><path d="M20 18h7l-1 4h-7z" fill="#0b4fae"/></svg>
  </aside>
  <section class="canvas">
    <p class="view">[—][俯视][二维线框]</p>
    <svg class="scene"><path d="M741 164 873 256 540 304z" fill="none" stroke="#d6d6d6"/><path d="M734.500 338v67M701 371.500h67" stroke="#b9b9b9"/><path d="M733 367h2M737 367h2M736 367v10M733 377h2M737 377h2M732 370h3v4h-3z" stroke="#eee" fill="none"/></svg>
    <svg class="ucs" viewBox="0 0 50 50"><path d="M4.500 12v36M2 46.500h36M1.500 43.500h6v6h-6z" fill="none" stroke="#c5c5c5"/><path d="M6 1l4 5 4-5M10 6v5M42 37l9 9M51 37l-9 9" fill="none" stroke="#b5b5b5"/></svg>

    <div class="tb t1"><i class="grip"></i>
      <button aria-label="轴网"><svg><use href="#redgrid"/></svg></button><button aria-label="轴号"><svg><use href="#dots"/></svg></button><button aria-label="单轴"><svg><use href="#dot1"/></svg></button><button aria-label="轴改"><svg><use href="#circ"/></svg></button><hr><button aria-label="标准柱"><svg><use href="#ibeam"/></svg></button><button aria-label="墙"><svg><use href="#wbox"/></svg></button><button aria-label="角柱"><svg><use href="#ell2"/></svg></button><button aria-label="单线变墙"><svg><use href="#vbar"/></svg></button><button aria-label="门窗"><svg><use href="#door"/></svg></button><button aria-label="柱"><svg><use href="#sq"/></svg></button><hr><button aria-label="编辑"><svg><use href="#pen"/></svg></button><button aria-label="移位"><svg><use href="#dmove"/></svg></button><button aria-label="移心"><svg><use href="#dmove"/></svg></button><hr class="soft"><button aria-label="门窗标注"><svg><use href="#comb"/></svg></button><button aria-label="墙厚"><svg><use href="#rdim"/></svg></button><button aria-label="逐点"><svg><use href="#ddim"/></svg></button><button aria-label="半径"><svg><use href="#tick"/></svg></button><button aria-label="角度"><svg><use href="#tri"/></svg></button><button aria-label="绿化"><svg><use href="#gdim"/></svg></button><hr><button aria-label="复制"><svg><use href="#diag"/></svg></button><button aria-label="自由移动"><svg><use href="#gmove"/></svg></button><button aria-label="自由粘贴"><svg><use href="#bmove"/></svg></button><button aria-label="图集"><svg><use href="#book"/></svg></button><button class="close" aria-label="关闭"><svg><use href="#x"/></svg></button></div>
    <div class="tb t2"><i class="grip"></i>
      <button aria-label="图层"><svg><use href="#lys"/></svg></button><button aria-label="图层转换"><svg><use href="#lyz"/></svg></button><hr><button aria-label="关闭图层"><svg><use href="#bulbb"/></svg></button><button aria-label="关闭其它"><svg><use href="#bulbp"/></svg></button><button aria-label="打开图层"><svg><use href="#bulb"/></svg></button><button aria-label="图层全开"><svg><use href="#lyy"/></svg></button><button aria-label="冻结"><svg><use href="#star"/></svg></button><button aria-label="冻结其它"><svg><use href="#starp"/></svg></button><button aria-label="解冻"><svg><use href="#glow"/></svg></button><button aria-label="锁定"><svg><use href="#lk"/></svg></button><button aria-label="锁定其它"><svg><use href="#lkp"/></svg></button><button aria-label="解锁"><svg><use href="#lky"/></svg></button><button aria-label="合并"><svg><use href="#lyp"/></svg></button><button aria-label="恢复"><svg><use href="#lyz"/></svg></button><button aria-label="文件"><svg><use href="#lyy"/></svg></button><button class="close" aria-label="关闭"><svg><use href="#x"/></svg></button></div>
    <div class="tb t3"><i class="grip"></i>
      <button aria-label="工程"><svg><use href="#clip"/></svg></button><button aria-label="查看"><svg><use href="#pgs"/></svg></button><hr class="soft"><button aria-label="立面"><svg><use href="#cols"/></svg></button><button aria-label="剖面"><svg><use href="#elev"/></svg></button><hr><button aria-label="坐标"><svg><use href="#l0"/></svg></button><button aria-label="标高"><svg><use href="#l0"/></svg></button><button aria-label="轴线"><svg><use href="#cross"/></svg></button><button aria-label="箭头"><svg><use href="#step"/></svg></button><button aria-label="引出"><svg><use href="#lines"/></svg></button><button aria-label="做法"><svg><use href="#tri"/></svg></button><button aria-label="索引"><svg><use href="#bdoor"/></svg></button><button aria-label="过滤"><svg><use href="#fun"/></svg></button><button aria-label="图名"><svg><use href="#hat"/></svg></button><hr class="soft"><button aria-label="表格"><svg><use href="#tbl"/></svg></button><button aria-label="栏杆"><svg><use href="#rail"/></svg></button><button aria-label="拱"><svg><use href="#arch"/></svg></button><button aria-label="尺寸"><svg><use href="#comb"/></svg></button><hr class="soft"><button aria-label="隐藏"><svg><use href="#reye"/></svg></button><button aria-label="修改"><svg><use href="#note"/></svg></button><button aria-label="显示"><svg><use href="#eye"/></svg></button><hr class="soft"><button aria-label="图库"><svg><use href="#grid4"/></svg></button><button aria-label="图框"><svg><use href="#frame"/></svg></button><button aria-label="统计"><svg><use href="#chart"/></svg></button><button class="close" aria-label="关闭"><svg><use href="#x"/></svg></button></div>
    <div class="tb t4"><i class="grip"></i>
      <button aria-label="设置"><svg><use href="#flag"/></svg></button><button aria-label="选项"><svg><use href="#clip"/></svg></button><button aria-label="图层"><svg><use href="#lys"/></svg></button><button aria-label="轴网"><svg><use href="#redgrid"/></svg></button><button aria-label="轴号"><svg><use href="#dots"/></svg></button><button aria-label="单轴"><svg><use href="#dot1"/></svg></button><button aria-label="柱"><svg><use href="#sq"/></svg></button><button aria-label="墙体"><svg><use href="#wbox"/></svg></button><button aria-label="幕墙"><svg><use href="#wall"/></svg></button><button aria-label="门"><svg><use href="#door"/></svg></button><button aria-label="面积"><svg><use href="#m2"/></svg></button><button aria-label="房间"><svg><use href="#rbox"/></svg></button><button aria-label="立面"><svg><use href="#cols"/></svg></button><button aria-label="楼梯"><svg><use href="#cols2"/></svg></button><button aria-label="阳台"><svg><use href="#mcol"/></svg></button><button aria-label="消息"><svg><use href="#mail"/></svg></button><button aria-label="打印"><svg><use href="#print"/></svg></button><button aria-label="笔"><svg><use href="#pen"/></svg></button><button aria-label="页面"><svg><use href="#pages"/></svg></button><button aria-label="图块"><svg><use href="#cards"/></svg></button><button aria-label="过滤"><svg><use href="#fun"/></svg></button><button aria-label="引出"><svg><use href="#lines"/></svg></button><button aria-label="做法"><svg><use href="#tri"/></svg></button><button aria-label="总图"><svg><use href="#globe"/></svg></button><button aria-label="帮助"><svg><use href="#help"/></svg></button><button class="close" aria-label="关闭"><svg><use href="#x"/></svg></button></div>
    <div class="tb t5"><i class="grip"></i>
      <button aria-label="前置"><svg><use href="#ord2"/></svg></button><button aria-label="后置"><svg><use href="#ord"/></svg></button><button aria-label="置上"><svg><use href="#ord2"/></svg></button><button aria-label="置下"><svg><use href="#ord"/></svg></button><hr><button aria-label="左对齐"><svg><use href="#alh"/></svg></button><button aria-label="右对齐"><svg><use href="#alh"/></svg></button><button aria-label="居中"><svg><use href="#alc"/></svg></button><hr><button aria-label="上对齐"><svg><use href="#alv"/></svg></button><button aria-label="下对齐"><svg><use href="#alm"/></svg></button><button aria-label="中对齐"><svg><use href="#alm"/></svg></button><hr><button aria-label="等距"><svg><use href="#vv"/></svg></button><button aria-label="行距"><svg><use href="#bul"/></svg></button><button aria-label="平行"><svg><use href="#par"/></svg></button><button class="close" aria-label="关闭"><svg><use href="#x"/></svg></button></div>

    <div class="command">
      <div class="history"><p class="old">指定下一点或[退出(E)/放弃(U)]:</p><p>指定下一点或[关闭(C)/退出(X)/放弃(U)]:</p><p>指定下一点或[关闭(C)/退出(X)/放弃(U)]:</p></div>
      <div class="prompt">
        <div class="handle"><i class="grip"></i><button aria-label="关闭命令行"><svg class="dn"><use href="#x"/></svg></button><button aria-label="自定义命令行"><svg><use href="#wrench"/></svg></button></div>
        <label for="cmdin" class="entry"><svg><use href="#cmd"/></svg><svg class="dn"><use href="#dn"/></svg><i class="caret"></i></label>
        <input id="cmdin" type="text" aria-label="命令">
        <svg class="dn up"><use href="#dn"/></svg>
      </div>
    </div>
  </section>
</main>

<footer>
  <div class="sheets"><button class="on">模型</button><button>布局1</button><button>布局2</button><button class="add">+</button></div>
  <div class="status">
    <button class="ratio">比例 1:100<svg class="dn"><use href="#dn"/></svg></button>
    <output>52189, 17282, 0</output>
    <button class="model">模型</button>
    <button aria-label="栅格"><svg><use href="#sgrid"/></svg></button><button aria-label="捕捉"><svg><use href="#sdots"/></svg></button><svg class="dn"><use href="#dn"/></svg>
    <button aria-label="推断约束"><svg><use href="#s1"/></svg></button><button class="on" aria-label="动态输入"><svg><use href="#s2"/></svg></button><button aria-label="正交"><svg><use href="#s3"/></svg></button><button class="on" aria-label="极轴"><svg><use href="#s4"/></svg></button><svg class="dn"><use href="#dn"/></svg><button aria-label="等轴测"><svg><use href="#s5"/></svg></button><svg class="dn"><use href="#dn"/></svg><button class="on" aria-label="对象追踪"><svg><use href="#s6"/></svg></button><button class="on" aria-label="对象捕捉"><svg><use href="#s7"/></svg></button><svg class="dn"><use href="#dn"/></svg><button aria-label="线宽"><svg><use href="#s8"/></svg></button><button class="on" aria-label="透明度"><svg><use href="#s9"/></svg></button><button aria-label="选择循环"><svg><use href="#s10"/></svg></button><button aria-label="三维捕捉"><svg><use href="#s11"/></svg></button><svg class="dn"><use href="#dn"/></svg><button class="on" aria-label="动态UCS"><svg><use href="#s12"/></svg></button><button aria-label="选择过滤"><svg><use href="#s13"/></svg></button><svg class="dn"><use href="#dn"/></svg><button class="on" aria-label="小控件"><svg><use href="#s14"/></svg></button><svg class="dn"><use href="#dn"/></svg><button class="on" aria-label="注释可见性"><svg><use href="#anno"/></svg></button><button aria-label="自动缩放"><svg><use href="#anno"/></svg></button><button aria-label="注释比例"><svg><use href="#ann"/></svg></button>
    <button class="zoom">1:1 / 100%</button><svg class="dn"><use href="#dn"/></svg><button aria-label="切换工作空间"><svg><use href="#gear"/></svg></button><svg class="dn"><use href="#dn"/></svg><button aria-label="注释监视器"><svg><use href="#plus"/></svg></button><button aria-label="单位"><svg><use href="#unit"/></svg></button><button class="units">小数</button><svg class="dn"><use href="#dn"/></svg><button aria-label="快捷特性"><svg><use href="#props"/></svg></button><button aria-label="锁定界面"><svg><use href="#mon"/></svg></button>
  </div>
</footer>
</body>
</html>
```
FILE: styles.css
```css
* { box-sizing: border-box; }
body {
  margin: 0;
  height: 100vh;
  overflow: hidden;
  display: flex;
  flex-direction: column;
  background: #222933;
  border-top: 2px solid #b9c3e2;
  border-left: 1px solid #8c98a5;
  color: #d5d9de;
  font: 8px/12px "Noto Sans", "Noto Sans CJK SC", sans-serif;
}
.defs { position: absolute; width: 0; height: 0; }
button, input, select { font: inherit; color: inherit; background: none; border: 0; margin: 0; padding: 0; outline: 0; }
button { display: flex; align-items: center; justify-content: center; white-space: nowrap; }
h1, h2, p, ul { margin: 0; padding: 0; font-weight: normal; font-size: inherit; }
svg { flex: none; display: block; width: 12px; height: 12px; }
svg.dn { width: 6px; height: 6px; color: #d0d4d9; }
svg.dn.dim { color: #59616c; }
svg.dn.side { transform: rotate(-90deg); }
svg.dn.up { transform: rotate(180deg); color: #555; }

/* Title bar and tabs */
.top { display: flex; flex: none; height: 36px; padding-top: 2px; }
.app { width: 27px; height: 28px; margin: 3px 3px 0 5px; background: linear-gradient(#cfcfd2, #8c8e93); }
.app svg { width: 27px; height: 27px; }
.top-main { flex: 1; min-width: 0; display: flex; flex-direction: column; }
.titlebar { height: 20px; display: grid; grid-template-columns: 8fr auto 9fr; align-items: center; }
.quick { display: flex; align-items: center; gap: 5px; padding-left: 3px; }
.quick-set { display: flex; justify-content: space-between; width: 129px; }
.narrow svg { width: 8px; height: 8px; }
.titlebar h1 { font-size: 9px; white-space: nowrap; color: #dcdfe3; }
.titlebar h1 span { margin-left: 11px; }
.account { display: flex; justify-content: flex-end; align-items: center; gap: 2px; padding-right: 43px; }
.account input { width: 124px; height: 13px; padding: 0 2px; background: #434a59; font-style: italic; }
.account input::placeholder { color: #a8aeb8; opacity: 1; }
.account button { margin-left: 2px; gap: 3px; }
.tabs { display: flex; align-items: center; height: 14px; color: #b4bac2; }
.tab-list { display: flex; justify-content: space-between; width: 392px; margin-right: 16px; }
.tabs button { height: 14px; padding: 0 7px; }
.tabs .on { background: #3b4250; color: #eceef0; }
.tabs .cam { padding: 0 3px 0 0; }
.cam svg { width: 11px; height: 7px; }

/* Ribbon */
.ribbon { display: flex; flex: none; gap: 2px; height: 67px; padding-left: 5px; }
.panel { display: flex; flex-direction: column; background: #3b4250; flex: none; min-width: 0; }
.panel .body { flex: 1; min-height: 0; display: flex; align-items: flex-start; padding-top: 2px; }
.panel h2 { display: flex; flex: none; justify-content: center; align-items: center; gap: 3px; height: 13px; color: #ced2d8; position: relative; white-space: nowrap; }
.panel h2 .dn { width: 8px; height: 8px; }
.more { position: absolute; right: 3px; }
.p-draw { width: 144px; }
.p-modify { width: 155px; }
.p-note { width: 106px; }
.p-layer { width: 173px; }
.p-block { width: 89px; }
.p-prop { width: 169px; }
.p-group { width: 44px; }
.p-util { width: 50px; }
.p-clip { width: 51px; }
.p-view { width: 41px; }
.big { flex-direction: column; justify-content: flex-start; width: 28px; line-height: 11px; padding-top: 2px; }
.big svg { width: 24px; height: 24px; margin-bottom: 1px; }
.big svg.dn { width: 6px; height: 6px; margin: 0; }
.col { display: flex; flex-direction: column; }
.col.grow { flex: 1; min-width: 0; }
.sm { height: 17px; gap: 3px; justify-content: flex-start; }
.sm svg { width: 13px; height: 13px; }
.sm svg.dn { width: 6px; height: 6px; margin-left: 2px; }
.sm.lit { background: #31525f; box-shadow: 0 0 0 1px #79a9b8 inset; width: 16px; justify-content: center; }
.line { display: flex; align-items: center; gap: 3px; height: 17px; }
.p-draw .body { padding-left: 2px; }
.p-draw .col { padding-left: 4px; }
.p-draw .sm svg.dn { margin-left: 0; }
.p-modify .body { padding-left: 2px; }
.p-modify .col { width: 41px; }
.p-modify .col:nth-child(3) { width: 53px; }
.p-modify .col svg.dn { margin-left: 4px; }
.p-modify .col:last-child { width: 14px; }
.p-note .body { padding-left: 3px; }
.p-note .col { padding-left: 3px; }
.p-layer .col, .p-prop .col { margin-left: 1px; }
.p-util .big, .p-clip .big { width: 34px; }
.p-view .big { width: 41px; }
.p-view h2 { justify-content: flex-start; padding-left: 4px; }
.combo { display: flex; align-items: center; flex: 1; gap: 2px; height: 15px; padding: 0 3px 0 2px; margin-bottom: 1px; background: #4b5364; border: 1px solid #535c6d; }
.combo select { flex: 1; min-width: 0; appearance: none; }
.combo.layers { flex: none; height: 16px; margin-right: 2px; }
.combo.layers svg:not(.dn) { width: 11px; }
.combo.color select { padding-left: 4px; }
.p-prop .combo { margin-right: 4px; font-size: 9px; }
.p-prop .line { gap: 1px; }
.swatch { width: 10px; height: 10px; background: #fff; margin: 0 3px; }
.p-prop .swatch { margin-left: 5px; }
.stroke { width: 43px; height: 1px; background: #b7bdc6; }

/* Work area */
main { flex: 1; min-height: 0; display: flex; margin-top: 3px; }
.palette { position: relative; flex: none; width: 70px; margin: 0 1px 0 5px; background: #f0f0f0; color: #1f1f1f; display: flex; flex-direction: column; }
.palette h2 { display: flex; align-items: center; gap: 4px; height: 19px; padding-left: 3px; background: #3b4250; color: #d9dde1; font-size: 9px; }
.grip { width: 2px; height: 9px; background: repeating-linear-gradient(#a7adb5 0 1px, transparent 1px 3px); }
.palette ul { list-style: none; display: grid; grid-auto-rows: 1fr; height: 274px; margin-top: 1px; }
.palette li { display: flex; align-items: center; padding-left: 4px; gap: 10px; line-height: 12px; color: #202020; }
.palette li::before { content: ""; border: 3px solid transparent; border-left: 4px solid #43505f; border-right: 0; }
.palette li.auth { padding-left: 0; gap: 6px; }
.palette li.auth::before { content: none; }
.palette li span { width: 34px; text-align-last: justify; white-space: nowrap; }
.badge { position: absolute; left: 2px; top: 108px; width: 44px; height: 44px; }
.canvas { position: relative; flex: 1; min-width: 0; background: #000; overflow: hidden; }
.view { position: absolute; left: 2px; top: 3px; color: #d9d9d9; }
.scene { position: absolute; inset: 0; width: 100%; height: 100%; }
.ucs { position: absolute; left: 10px; bottom: 10px; width: 50px; height: 50px; overflow: visible; }
.tb { position: absolute; display: flex; align-items: center; justify-content: space-between; height: 15px; padding: 0 8px 0 3px; background: #3d4451; }
.tb hr { width: 1px; height: 12px; margin: 0; border: 0; background: #89919b; }
.tb hr.soft { background: #59626e; }
.tb .close { position: absolute; right: 0; top: 1px; color: #f2f2f2; }
.tb .close svg { width: 5px; height: 5px; }
.t1 { left: 53px; top: 13px; width: 393px; }
.t2 { left: 62px; top: 33px; width: 254px; }
.t3 { left: 78px; top: 64px; width: 398px; }
.t4 { left: 84px; top: 153px; width: 409px; }
.t5 { left: 78px; top: 174px; width: 231px; }

/* Command line */
.command { position: absolute; left: 250px; right: 78px; bottom: 0; }
.history { margin-left: 40px; display: flex; flex-direction: column; align-items: flex-start; gap: 1px; margin-bottom: 2px; font: 9px/10px "Liberation Mono", "Noto Sans CJK SC", monospace; }
.history p { height: 10px; padding: 0 1px; background: #4c4c4c; color: #e2e2e2; white-space: nowrap; }
.history .old { color: #a8a8a8; }
.prompt { display: flex; align-items: center; height: 16px; background: #fff; color: #333; }
.handle { display: flex; align-items: center; gap: 7px; width: 39px; height: 16px; padding-left: 2px; background: #2c323d; }
.handle .grip { width: 3px; height: 12px; }
.handle svg { width: 11px; height: 11px; }
.handle svg.dn { width: 7px; height: 7px; }
.entry { display: flex; align-items: center; gap: 2px; padding-left: 2px; }
.entry svg.dn, .prompt > svg.dn { color: #444; }
.caret { width: 1px; height: 10px; background: #333; }
.prompt input { flex: 1; min-width: 0; }
.prompt > .dn { margin-right: 2px; }

/* Status bar */
footer { flex: none; display: flex; height: 23px; border-bottom: 2px solid #45404f; background: #222933; overflow: hidden; }
.sheets { display: flex; width: 376px; flex: none; padding: 1px 0 0 10px; gap: 2px; height: 16px; color: #b5bac1; font-size: 8px; }
.sheets button { width: 35px; background: #2c333e; border-radius: 0 0 8px 8px; }
.sheets .on { color: #fff; background: #3b4250; font-weight: bold; }
.sheets .add { width: 22px; font-size: 12px; }
.status { display: flex; align-items: center; height: 17px; margin: 2px 0 0 5px; font-size: 9px; color: #e2e5e8; background: #343b48; }
.status button { flex: none; width: 17px; height: 17px; border-left: 1px solid #272e39; }
.status button.on { background: #4c7fae; }
.status > svg.dn { width: 6px; margin: 0 2px 0 3px; }
.status .ratio { width: 52px; gap: 3px; }
.status output { width: 94px; text-align: right; padding-right: 2px; }
.status .model { width: 24px; font-size: 8px; }
.status .zoom { width: 46px; }
.status .units { width: 38px; justify-content: flex-start; padding-left: 3px; font-size: 8px; }
```
